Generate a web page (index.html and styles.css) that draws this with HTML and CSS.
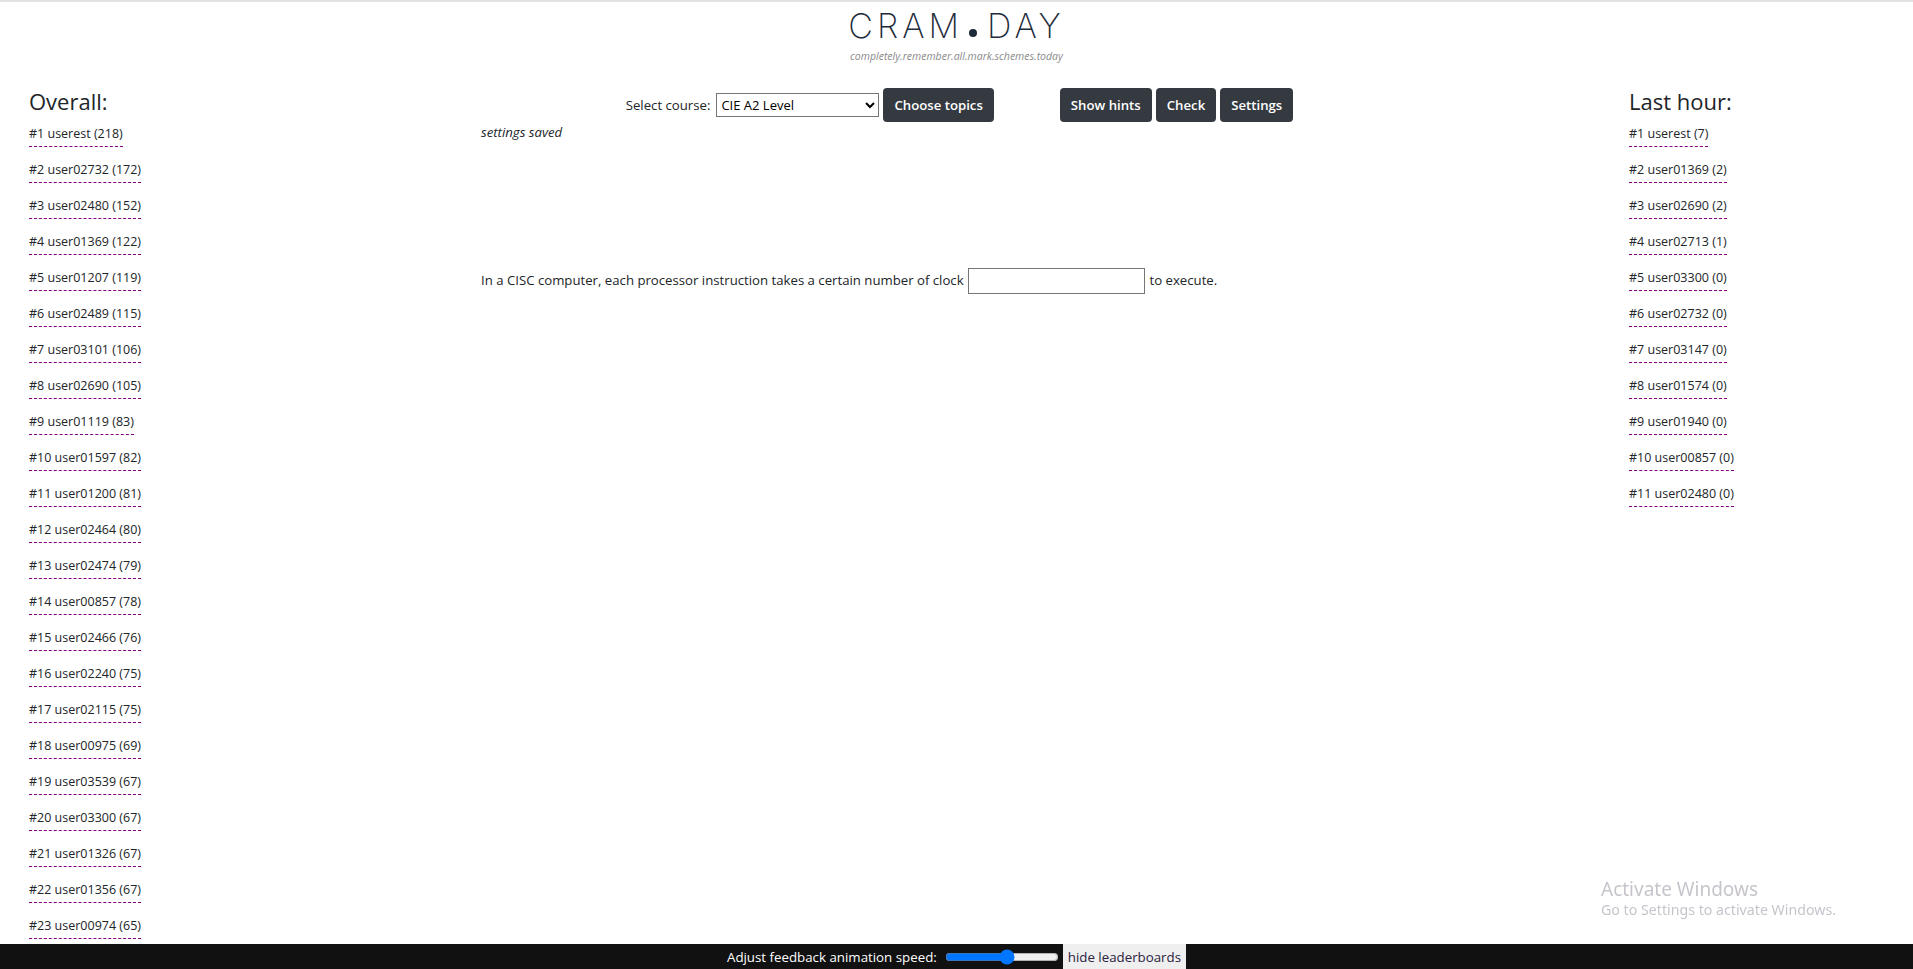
FILE: index.html
```html
<!DOCTYPE html>
<html>
<head>
<meta charset="utf-8">
<link rel="stylesheet" href="styles.css">
</head>
<body>
<header class="header">
  <div class="logo">CRAM<span class="dot"></span>DAY</div>
  <div class="tagline">completely.remember.all.mark.schemes.today</div>
</header>
<div class="layout">
  <aside class="board">
    <h2 class="board-title">Overall:</h2>
    <ul class="board-list">
      <li><span class="entry">#1 userest (218)</span></li>
      <li><span class="entry">#2 user02732 (172)</span></li>
      <li><span class="entry">#3 user02480 (152)</span></li>
      <li><span class="entry">#4 user01369 (122)</span></li>
      <li><span class="entry">#5 user01207 (119)</span></li>
      <li><span class="entry">#6 user02489 (115)</span></li>
      <li><span class="entry">#7 user03101 (106)</span></li>
      <li><span class="entry">#8 user02690 (105)</span></li>
      <li><span class="entry">#9 user01119 (83)</span></li>
      <li><span class="entry">#10 user01597 (82)</span></li>
      <li><span class="entry">#11 user01200 (81)</span></li>
      <li><span class="entry">#12 user02464 (80)</span></li>
      <li><span class="entry">#13 user02474 (79)</span></li>
      <li><span class="entry">#14 user00857 (78)</span></li>
      <li><span class="entry">#15 user02466 (76)</span></li>
      <li><span class="entry">#16 user02240 (75)</span></li>
      <li><span class="entry">#17 user02115 (75)</span></li>
      <li><span class="entry">#18 user00975 (69)</span></li>
      <li><span class="entry">#19 user03539 (67)</span></li>
      <li><span class="entry">#20 user03300 (67)</span></li>
      <li><span class="entry">#21 user01326 (67)</span></li>
      <li><span class="entry">#22 user01356 (67)</span></li>
      <li><span class="entry">#23 user00974 (65)</span></li>
    </ul>
  </aside>
  <main class="main">
    <div class="controls">
      <div class="group">
        <label class="course-label">Select course:</label>
        <select class="course-select"><option>CIE A2 Level</option></select>
        <button class="btn">Choose topics</button>
      </div>
      <div class="group">
        <button class="btn">Show hints</button>
        <button class="btn">Check</button>
        <button class="btn">Settings</button>
      </div>
    </div>
    <div class="status">settings saved</div>
    <div class="question">In a CISC computer, each processor instruction takes a certain number of clock <input class="answer" type="text"> to execute.</div>
  </main>
  <aside class="board right">
    <h2 class="board-title">Last hour:</h2>
    <ul class="board-list">
      <li><span class="entry">#1 userest (7)</span></li>
      <li><span class="entry">#2 user01369 (2)</span></li>
      <li><span class="entry">#3 user02690 (2)</span></li>
      <li><span class="entry">#4 user02713 (1)</span></li>
      <li><span class="entry">#5 user03300 (0)</span></li>
      <li><span class="entry">#6 user02732 (0)</span></li>
      <li><span class="entry">#7 user03147 (0)</span></li>
      <li><span class="entry">#8 user01574 (0)</span></li>
      <li><span class="entry">#9 user01940 (0)</span></li>
      <li><span class="entry">#10 user00857 (0)</span></li>
      <li><span class="entry">#11 user02480 (0)</span></li>
    </ul>
  </aside>
</div>
<div class="activate">
  <div class="activate-title">Activate Windows</div>
  <div class="activate-sub">Go to Settings to activate Windows.</div>
</div>
<footer class="footer">
  <span class="speed-label">Adjust feedback animation speed:</span>
  <input class="speed" type="range" min="0" max="100" value="55">
  <button class="hide-btn">hide leaderboards</button>
</footer>
</body>
</html>
```
FILE: styles.css
```css
* { box-sizing: border-box; }
html, body { margin: 0; padding: 0; }
body {
  font-family: "Open Sans", "Noto Sans", sans-serif;
  font-size: 12.5px;
  color: #212529;
  background: #fff;
  border-top: 2px solid #e2e2e2;
  height: 969px;
  overflow: hidden;
}
.header {
  text-align: center;
  padding-top: 4px;
  height: 70px;
}
.logo {
  font-family: "Inter", "Lato", sans-serif;
  font-weight: 200;
  font-size: 34px;
  letter-spacing: 4px;
  color: #1d2a3a;
  line-height: 40px;
}
.dot {
  display: inline-block;
  width: 8px;
  height: 8px;
  border-radius: 50%;
  background: #1d2a3a;
  margin: 0 10px 0 6px;
  vertical-align: 1px;
}
.tagline {
  font-style: italic;
  font-size: 10.5px;
  color: #8a8a8a;
  margin-top: 3px;
}
.layout {
  display: grid;
  grid-template-columns: 481px 1fr 284px;
}
.board { padding-left: 29px; }
.board.right { padding-left: 0; }
.board-title {
  font-weight: 400;
  font-size: 22px;
  margin: 14px 0 6px;
  line-height: 30px;
}
.board-list {
  list-style: none;
  margin: 0;
  padding: 0;
}
.board-list li {
  height: 36px;
  padding-top: 3px;
}
.entry {
  display: inline-block;
  line-height: 17px;
  padding-bottom: 4px;
  border-bottom: 1px dashed #800080;
}
.main { padding-top: 16px; font-size: 13.2px; }
.controls {
  display: flex;
  justify-content: center;
  gap: 66px;
  margin-left: -481px;
  margin-right: -284px;
  padding-left: 6px;
}
.group { display: flex; align-items: center; gap: 4px; }
.course-label { margin-right: 2px; }
.course-select {
  width: 163px;
  height: 24px;
  font-family: inherit;
  font-size: 13px;
  border: 1px solid #767676;
  border-radius: 0;
  background: #fff;
  color: #000;
}
.btn {
  background: #343a40;
  color: #fff;
  border: none;
  border-radius: 4px;
  height: 34px;
  padding: 0 11px;
  font-family: inherit;
  font-size: 13.2px;
  font-weight: 600;
}
.status {
  font-style: italic;
  margin-top: 1px;
  height: 144px;
}
.question { line-height: 26px; }
.answer {
  width: 177px;
  height: 26px;
  border: 1px solid #767676;
  vertical-align: middle;
  margin: 0 1px;
}
.activate {
  position: fixed;
  left: 1601px;
  top: 877px;
  color: #c8c4cc;
  font-family: "Noto Sans", sans-serif;
}
.activate-title { font-size: 19px; line-height: 24px; }
.activate-sub { font-size: 14.2px; line-height: 18px; }
.footer {
  position: fixed;
  left: 0; right: 0; bottom: 0;
  height: 25px;
  background: #111;
  display: flex;
  justify-content: center;
  align-items: center;
  color: #fff;
  font-size: 13.3px;
}
.speed-label { margin-right: 4px; }
.speed { width: 114px; margin: 0 4px; accent-color: #0075ff; }
.hide-btn {
  height: 25px;
  border: none;
  background: #efefef;
  color: #2a2140;
  font-family: inherit;
  font-size: 13.3px;
  padding: 0 5px;
}
```
